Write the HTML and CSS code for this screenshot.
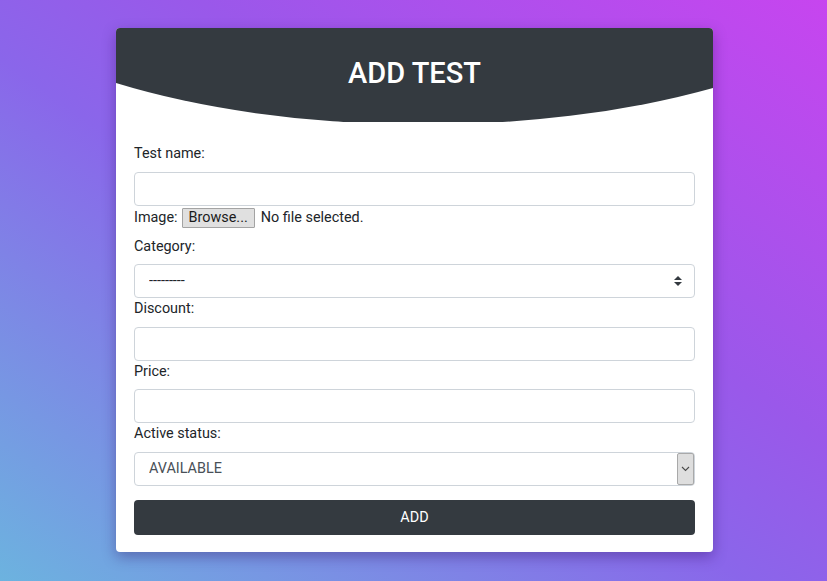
FILE: index.html
```html
<!DOCTYPE html>
<html lang="en">
<head>
<meta charset="utf-8">
<title>Add Test</title>
<link rel="stylesheet" href="styles.css">
</head>
<body>
<main class="page">
  <section class="card">
    <header class="card-header">
      <svg class="wave" width="597" height="94" viewBox="0 0 597 94" aria-hidden="true">
        <path d="M0 0 H597 V60 A 500 197 0 0 1 0 55 Z" fill="#343a40"/>
      </svg>
      <h1 class="title">ADD TEST</h1>
    </header>
    <form class="form">
      <label class="lbl" for="name">Test name:</label>
      <input class="control" id="name" type="text">

      <div class="lbl file-row">
        <span>Image:</span>
        <span class="browse">Browse...</span>
        <span class="file-status">No file selected.</span>
      </div>

      <label class="lbl" for="cat">Category:</label>
      <div class="select-wrap">
        <select class="control select" id="cat"><option>---------</option></select>
        <svg class="updown" width="8" height="10" viewBox="0 0 4 5" aria-hidden="true"><path d="M2 0L0 2h4zm0 5L0 3h4z" fill="#343a40"/></svg>
      </div>

      <label class="lbl" for="disc">Discount:</label>
      <input class="control" id="disc" type="text">

      <label class="lbl" for="price">Price:</label>
      <input class="control" id="price" type="text">

      <label class="lbl" for="status">Active status:</label>
      <div class="select-wrap">
        <select class="control select status" id="status"><option>AVAILABLE</option></select>
        <span class="drop-btn" aria-hidden="true">
          <svg width="9" height="6" viewBox="0 0 9 6"><path d="M1 1 L4.5 4.5 L8 1" fill="none" stroke="#4a4a4a" stroke-width="1.1"/></svg>
        </span>
      </div>

      <button class="submit" type="button">ADD</button>
    </form>
  </section>
</main>
</body>
</html>
```

FILE: styles.css
```css
* { box-sizing: border-box; }

html, body {
  margin: 0;
  height: 100%;
}

body {
  font-family: Roboto, "Liberation Sans", Arial, sans-serif;
  color: #212529;
  background: linear-gradient(to top right, #6cb3df 0%, #8a66ea 45%, #9a58ea 62%, #c745ef 100%);
  overflow: hidden;
}

.page {
  display: flex;
  justify-content: center;
  padding: 28px 0 0 2px;
}

.card {
  width: 597px;
  background: #fff;
  border-radius: 4px;
  box-shadow: 0 5px 14px rgba(40, 10, 90, 0.35);
  overflow: hidden;
}

.card-header {
  display: grid;
  height: 94px;
}

.wave, .title {
  grid-area: 1 / 1;
}

.wave { display: block; }

.title {
  margin: 28px 0 0;
  text-align: center;
  color: #fff;
  font-size: 29px;
  font-weight: 500;
  line-height: 35px;
  align-self: start;
}

.form {
  display: flex;
  flex-direction: column;
  padding: 21px 18px 17px;
}

.lbl {
  display: block;
  font-size: 14.4px;
  line-height: 21.6px;
  margin-bottom: 7px;
}

.file-row {
  display: flex;
  align-items: center;
  height: 23px;
  padding-top: 2px;
  margin-bottom: 7px;
}

.browse {
  margin-left: 4px;
  height: 20px;
  padding: 0 6px;
  line-height: 18px;
  background: #e0e0e0;
  border: 1px solid #a3a3a3;
  color: #1b1b1b;
  border-radius: 1px;
}

.file-status { margin-left: 6px; }

.control {
  display: block;
  width: 100%;
  height: 34px;
  padding: 6px 14px;
  font-family: inherit;
  font-size: 14.4px;
  line-height: 20px;
  color: #495057;
  background: #fff;
  border: 1px solid #ced4da;
  border-radius: 4px;
  outline: none;
  margin: 0;
}

.select-wrap {
  display: grid;
  align-items: center;
}

.select-wrap > * { grid-area: 1 / 1; }

.select {
  -webkit-appearance: none;
  appearance: none;
  color: #212529;
}

.select.status { color: #495057; }

.updown {
  justify-self: end;
  margin-right: 13px;
}

.drop-btn {
  justify-self: end;
  align-self: stretch;
  width: 17px;
  margin: 1px 1px 1px 0;
  background: #dedede;
  border: 1px solid #a9a9a9;
  border-radius: 2px;
  display: flex;
  align-items: center;
  justify-content: center;
}

.submit {
  margin-top: 14px;
  height: 35px;
  border: 0;
  border-radius: 4px;
  background: #343a40;
  color: #fff;
  font-family: inherit;
  font-size: 14.4px;
  line-height: 21px;
}
```
